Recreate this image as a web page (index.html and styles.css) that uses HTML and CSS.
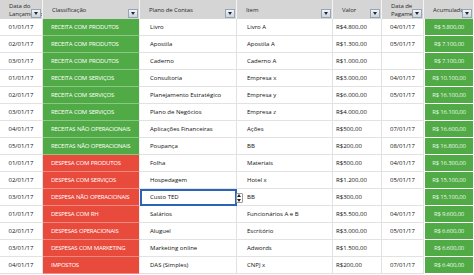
FILE: index.html
```html
<!DOCTYPE html>
<html lang="pt">
<head>
<meta charset="utf-8">
<title>Fluxo de Caixa</title>
<link rel="stylesheet" href="styles.css">
</head>
<body>
<div class="sheet">
  <div class="h two"><span>Data do<br>Lançamento</span><i class="dd"></i></div>
  <div class="h"><span>Classificação</span><i class="dd"></i></div>
  <div class="h"><span>Plano de Contas</span><i class="dd"></i></div>
  <div class="h"><span>Item</span><i class="dd"></i></div>
  <div class="h"><span>Valor</span><i class="dd"></i></div>
  <div class="h two"><span>Data de<br>Pagamento</span><i class="dd"></i></div>
  <div class="h ctr"><span>Acumulado</span><i class="dd"></i></div>

  <div class="c ctr">01/01/17</div><div class="c g">RECEITA COM PRODUTOS</div><div class="c">Livro</div><div class="c">Livro A</div><div class="c v">R$4.800,00</div><div class="c ctr">04/01/17</div><div class="c acc">R$ 5.800,00</div>
  <div class="c ctr">02/01/17</div><div class="c g">RECEITA COM PRODUTOS</div><div class="c">Apostila</div><div class="c">Apostila A</div><div class="c v">R$1.300,00</div><div class="c ctr">05/01/17</div><div class="c acc">R$ 7.100,00</div>
  <div class="c ctr">03/01/17</div><div class="c g">RECEITA COM PRODUTOS</div><div class="c">Caderno</div><div class="c">Caderno A</div><div class="c v">R$1.000,00</div><div class="c ctr"></div><div class="c acc">R$ 7.100,00</div>
  <div class="c ctr">01/01/17</div><div class="c g">RECEITA COM SERVIÇOS</div><div class="c">Consultoria</div><div class="c">Empresa x</div><div class="c v">R$3.000,00</div><div class="c ctr">04/01/17</div><div class="c acc">R$ 10.100,00</div>
  <div class="c ctr">02/01/17</div><div class="c g">RECEITA COM SERVIÇOS</div><div class="c">Planejamento Estratégico</div><div class="c">Empresa y</div><div class="c v">R$6.000,00</div><div class="c ctr">05/01/17</div><div class="c acc">R$ 16.100,00</div>
  <div class="c ctr">03/01/17</div><div class="c g">RECEITA COM SERVIÇOS</div><div class="c">Plano de Negócios</div><div class="c">Empresa z</div><div class="c v">R$4.000,00</div><div class="c ctr"></div><div class="c acc">R$ 16.100,00</div>
  <div class="c ctr">04/01/17</div><div class="c g">RECEITAS NÃO OPERACIONAIS</div><div class="c">Aplicações Financeiras</div><div class="c">Ações</div><div class="c v">R$500,00</div><div class="c ctr">07/01/17</div><div class="c acc">R$ 16.600,00</div>
  <div class="c ctr">05/01/17</div><div class="c g">RECEITAS NÃO OPERACIONAIS</div><div class="c">Poupança</div><div class="c">BB</div><div class="c v">R$200,00</div><div class="c ctr">08/01/17</div><div class="c acc">R$ 16.800,00</div>
  <div class="c ctr">01/01/17</div><div class="c r">DESPESA COM PRODUTOS</div><div class="c">Folha</div><div class="c">Materiais</div><div class="c v">R$500,00</div><div class="c ctr">04/01/17</div><div class="c acc">R$ 16.300,00</div>
  <div class="c ctr">02/01/17</div><div class="c r">DESPESA COM SERVIÇOS</div><div class="c">Hospedagem</div><div class="c">Hotel x</div><div class="c v">R$1.200,00</div><div class="c ctr">05/01/17</div><div class="c acc">R$ 15.100,00</div>
  <div class="c ctr">03/01/17</div><div class="c r">DESPESA NÃO OPERACIONAIS</div><div class="c sel">Custo TED<i class="spin"></i></div><div class="c">BB</div><div class="c v">R$300,00</div><div class="c ctr"></div><div class="c acc">R$ 15.100,00</div>
  <div class="c ctr">01/01/17</div><div class="c r">DESPESA COM RH</div><div class="c">Salários</div><div class="c">Funcionários A e B</div><div class="c v">R$5.500,00</div><div class="c ctr">04/01/17</div><div class="c acc">R$ 9.600,00</div>
  <div class="c ctr">02/01/17</div><div class="c r">DESPESAS OPERACIONAIS</div><div class="c">Aluguel</div><div class="c">Escritório</div><div class="c v">R$3.000,00</div><div class="c ctr">05/01/17</div><div class="c acc">R$ 6.600,00</div>
  <div class="c ctr">03/01/17</div><div class="c r">DESPESAS COM MARKETING</div><div class="c">Marketing online</div><div class="c">Adwords</div><div class="c v">R$1.500,00</div><div class="c ctr"></div><div class="c acc">R$ 6.600,00</div>
  <div class="c ctr">04/01/17</div><div class="c r">IMPOSTOS</div><div class="c">DAS (Simples)</div><div class="c">CNPJ x</div><div class="c v">R$200,00</div><div class="c ctr">07/01/17</div><div class="c acc">R$ 6.400,00</div>
</div>
</body>
</html>
```
FILE: styles.css
```css
html, body {
  margin: 0;
  padding: 0;
  background: #ffffff;
}
body {
  width: 474px;
  height: 275px;
  overflow: hidden;
  font-family: "Open Sans", "Noto Sans", sans-serif;
  font-size: 6px;
  color: #111;
}
.sheet {
  display: grid;
  grid-template-columns: 43px 97px 97px 96px 49px 42px 50px;
  grid-template-rows: 19px;
  grid-auto-rows: 17px;
}
.h {
  position: relative;
  background: #d5d5d5;
  border-right: 1px solid #f4f4f4;
  display: flex;
  align-items: center;
  padding-left: 9px;
  color: #2a2a2a;
  overflow: hidden;
  white-space: nowrap;
  line-height: 8px;
  letter-spacing: -0.1px;
}
.h.ctr { justify-content: center; padding-left: 0; }
.dd {
  position: absolute;
  right: 1px;
  top: 9px;
  width: 8px;
  height: 7px;
  border: 1px solid #98a4b0;
  background: linear-gradient(#f2f5f8, #c9d3de);
  box-sizing: content-box;
}
.dd::after {
  content: "";
  position: absolute;
  left: 2px;
  top: 2px;
  border-left: 2px solid transparent;
  border-right: 2px solid transparent;
  border-top: 3px solid #1f2a36;
}
.c {
  position: relative;
  display: flex;
  align-items: center;
  padding-left: 10px;
  border-right: 1px solid #e2e2e2;
  border-bottom: 1px solid #e2e2e2;
  white-space: nowrap;
}
.c.ctr { justify-content: center; padding-left: 0; }
.c.v { padding-left: 3px; }
.c.g, .c.r {
  color: #fff;
  padding-left: 8px;
  letter-spacing: -0.25px;
  word-spacing: 0.4px;
  border-bottom-color: rgba(255,255,255,0.35);
  border-right-color: #f0f0f0;
}
.c.g { background: #50aa45; }
.c.r { background: #e84a3c; }
.c.acc {
  justify-content: center;
  padding-left: 0;
  color: #eaf7e8;
  letter-spacing: -0.2px;
  background: #50aa45;
  border-right: 1px solid #fff;
  border-left: 1px solid #fff;
  border-bottom: 1px solid #fff;
}
.c.sel {
  outline: 2px solid #2b63b8;
  outline-offset: -2px;
  z-index: 2;
}
.spin {
  position: absolute;
  right: -7px;
  top: 4px;
  width: 5px;
  height: 8px;
  background: #fff;
  border: 1px solid #9a9a9a;
  border-radius: 1px;
}
.spin::before, .spin::after {
  content: "";
  position: absolute;
  left: 0;
  border-left: 2.5px solid transparent;
  border-right: 2.5px solid transparent;
}
.spin::before { top: 0; border-bottom: 3px solid #222; }
.spin::after { bottom: 0; border-top: 3px solid #222; }
```
